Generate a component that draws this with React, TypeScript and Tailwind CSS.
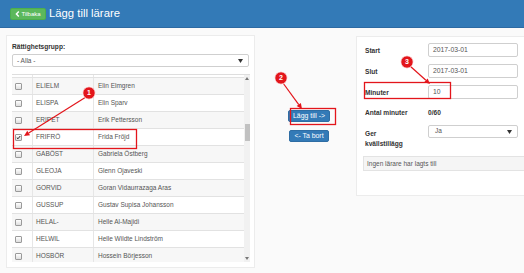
import React from "react";

const rows: [string, string, boolean][] = [
  ["ELIELM", "Elin Elmgren", false],
  ["ELISPA", "Elin Sparv", false],
  ["ERIPET", "Erik Pettersson", false],
  ["FRIFRÖ", "Frida Fröjd", true],
  ["GABÖST", "Gabriela Östberg", false],
  ["GLEOJA", "Glenn Ojaveski", false],
  ["GORVID", "Goran Vidaurrazaga Aras", false],
  ["GUSSUP", "Gustav Supisa Johansson", false],
  ["HELAL-", "Helle Al-Majidi", false],
  ["HELWIL", "Helle Wildte Lindström", false],
  ["HOSBÖR", "Hossein Börjesson", false],
];

function Checkbox({ checked }: { checked: boolean }) {
  return (
    <div className="w-[7px] h-[7px] rounded-[1px] border border-[#9a9a9a] bg-gradient-to-b from-[#ffffff] to-[#dedede] flex items-center justify-center">
      {checked && (
        <svg width="7" height="7" viewBox="0 0 8 8">
          <path d="M1.3 4.2 L3.2 6 L6.8 1.6" fill="none" stroke="#222" strokeWidth="1.6" />
        </svg>
      )}
    </div>
  );
}

function Caret() {
  return (
    <svg width="5" height="4" viewBox="0 0 5 4">
      <path d="M0 0 H5 L2.5 4 Z" fill="#333" />
    </svg>
  );
}

function Badge({ cx, cy, n }: { cx: number; cy: number; n: string }) {
  return (
    <g>
      <circle cx={cx} cy={cy} r={6.2} fill="#e3151b" stroke="#ffffff" strokeWidth={0.8} />
      <text
        x={cx}
        y={cy + 2.4}
        textAnchor="middle"
        fontSize="7"
        fontWeight="bold"
        fill="#ffffff"
        fontFamily="Liberation Sans, Arial, sans-serif"
      >
        {n}
      </text>
    </g>
  );
}

function Arrow({ x1, y1, x2, y2 }: { x1: number; y1: number; x2: number; y2: number }) {
  const ang = Math.atan2(y2 - y1, x2 - x1);
  const L = 5.5;
  const W = 2.6;
  const bx = x2 - L * Math.cos(ang);
  const by = y2 - L * Math.sin(ang);
  const px = -Math.sin(ang) * W;
  const py = Math.cos(ang) * W;
  return (
    <g>
      <line x1={x1} y1={y1} x2={bx} y2={by} stroke="#e3151b" strokeWidth={1.2} />
      <polygon points={`${x2},${y2} ${bx + px},${by + py} ${bx - px},${by - py}`} fill="#e3151b" />
    </g>
  );
}

export default function App() {
  return (
    <div className="relative w-[524px] h-[273px] overflow-hidden bg-[#fafafa] font-['Liberation_Sans',Arial,sans-serif] text-[#555]">
      {/* Header */}
      <div className="h-[28px] bg-[#337ab7] border-b border-[#2d6aa3] flex items-center pl-[10px] gap-[3px]">
        <div className="h-[12px] w-[36px] rounded-[2px] bg-[#5cb85c] border border-[#4cae4c] flex items-center justify-center gap-[1px] text-white text-[6px] leading-none">
          <svg width="5" height="6" viewBox="0 0 5 6">
            <path d="M3.8 0.6 L1.4 3 L3.8 5.4" fill="none" stroke="#fff" strokeWidth="1.4" />
          </svg>
          <span>Tilbaka</span>
        </div>
        <span className="text-white text-[11.3px] leading-none">Lägg till lärare</span>
      </div>

      {/* Body */}
      <div className="flex h-[245px]">
        <div className="w-[3px] bg-[#dce8f4]" />
        <div className="flex pt-[7px] pl-[6px]">
          {/* Left panel */}
          <div className="w-[249px] h-[233px] bg-white border border-[#ececec] px-[5px] pt-[7px]">
            <div className="text-[6.6px] font-bold leading-[8px] text-[#333]">Rättighetsgrupp:</div>
            <div className="mt-[3px] h-[13px] w-[237px] border border-[#cfcfcf] rounded-[2px] flex items-center justify-between pl-[4px] pr-[5px] text-[6.5px]">
              <span>- Alla -</span>
              <Caret />
            </div>
            <div className="mt-[7px] h-[188px] w-[238px] border-t border-[#dedede] flex overflow-hidden">
              <div className="flex-1 flex flex-col">
                <div className="h-[3px] shrink-0 flex border-b border-[#e2e2e2]">
                  <div className="w-[21px] border-r border-[#e6e6e6]" />
                  <div className="w-[61px] border-r border-[#e6e6e6]" />
                </div>
                {rows.map(([code, name, checked], i) => (
                  <div
                    key={code}
                    className={`h-[17px] shrink-0 flex items-stretch border-b border-[#e2e2e2] text-[6.5px] ${
                      i % 2 === 0 ? "bg-[#f7f7f7]" : "bg-white"
                    }`}
                  >
                    <div className="w-[21px] border-r border-[#e6e6e6] flex items-center pl-[3px]">
                      <Checkbox checked={checked} />
                    </div>
                    <div className="w-[61px] border-r border-[#e6e6e6] flex items-center pl-[3px]">{code}</div>
                    <div className="flex-1 flex items-center pl-[4px]">{name}</div>
                  </div>
                ))}
              </div>
              {/* scrollbar */}
              <div className="w-[6px] bg-[#f1f1f1] flex flex-col items-center">
                <svg width="4" height="3" viewBox="0 0 4 3" className="mt-[2px]">
                  <path d="M0 3 H4 L2 0 Z" fill="#777" />
                </svg>
                <div className="mt-[44px] w-[5px] h-[17px] bg-[#c1c1c1]" />
                <div className="flex-1" />
                <svg width="4" height="3" viewBox="0 0 4 3" className="mb-[2px]">
                  <path d="M0 0 H4 L2 3 Z" fill="#777" />
                </svg>
              </div>
            </div>
          </div>

          {/* Middle */}
          <div className="w-[101px] flex flex-col items-center pl-[7px] pt-[75px] gap-[8px]">
            <div className="h-[12px] px-[4px] bg-[#337ab7] border border-[#2e6da4] rounded-[2px] text-white text-[6.9px] flex items-center leading-none">
              Lägg till -&gt;
            </div>
            <div className="h-[12px] px-[4px] bg-[#337ab7] border border-[#2e6da4] rounded-[2px] text-white text-[6.9px] flex items-center leading-none">
              &lt;- Ta bort
            </div>
          </div>

          {/* Right panel */}
          <div className="w-[170px] h-[160px] mt-[1px] bg-white border border-[#ececec] pl-[6px] pt-[6px] flex flex-col">
            {[
              ["Start", "2017-03-01"],
              ["Slut", "2017-03-01"],
              ["Minuter", "10"],
            ].map(([label, value]) => (
              <div key={label} className="h-[14px] mb-[7px] flex items-center">
                <div className="w-[65px] pl-[2px] pt-[2px] text-[6.6px] font-bold text-[#333]">{label}</div>
                <div className="w-[90px] h-[14px] border border-[#cfcfcf] rounded-[2px] flex items-center pl-[4px] text-[6.8px]">
                  {value}
                </div>
              </div>
            ))}
            <div className="h-[14px] flex items-center">
              <div className="w-[65px] pl-[2px] text-[6.6px] font-bold text-[#333]">Antal minuter</div>
              <div className="text-[6.6px] font-bold text-[#333]">0/60</div>
            </div>
            <div className="mt-[5px] flex items-start">
              <div className="w-[65px] pl-[2px] pt-[4px] text-[6.6px] font-bold text-[#333] leading-[10px]">
                Ger
                <br />
                kvällstillägg
              </div>
              <div className="w-[90px] h-[13px] border border-[#cfcfcf] rounded-[2px] flex items-center justify-between pl-[6px] pr-[5px] text-[6.5px]">
                <span className="-mt-[2px]">Ja</span>
                <Caret />
              </div>
            </div>
            <div className="mt-[7px] h-[15px] bg-[#f5f5f5] border border-[#e3e3e3] flex items-center pl-[3px] text-[6.5px]">
              Ingen lärare har lagts till
            </div>
          </div>
        </div>
      </div>

      {/* Annotations overlay */}
      <svg className="absolute left-0 top-0 pointer-events-none" width="524" height="273" viewBox="0 0 524 273">
        <rect x="13.5" y="129.5" width="123" height="19" fill="none" stroke="#e3151b" strokeWidth="1.3" />
        <rect x="290.5" y="108.5" width="45" height="16" fill="none" stroke="#e3151b" strokeWidth="1.3" />
        <rect x="364.5" y="82.5" width="86" height="16" fill="none" stroke="#e3151b" strokeWidth="1.3" />
        <Arrow x1={86} y1={97} x2={24} y2={136} />
        <Arrow x1={283} y1={83} x2={302} y2={109} />
        <Arrow x1={410} y1={66} x2={430} y2={84} />
        <Badge cx={89} cy={93} n="1" />
        <Badge cx={281} cy={78} n="2" />
        <Badge cx={407} cy={62} n="3" />
      </svg>
    </div>
  );
}
